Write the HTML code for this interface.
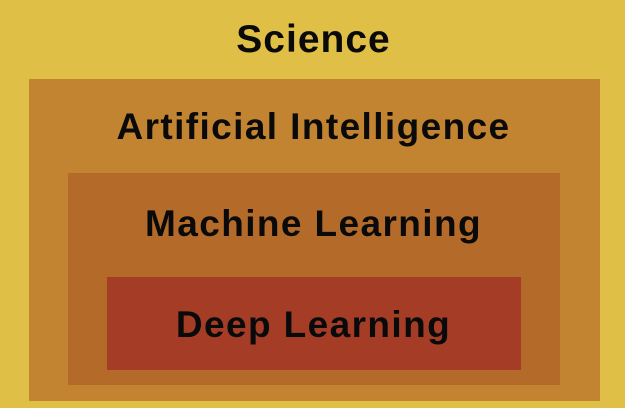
<!DOCTYPE html>
<html><head><style>
html,body{margin:0;padding:0}
body{width:625px;height:408px;background:#DFBF45;position:relative;overflow:hidden;font-family:"Liberation Sans",Arial,sans-serif;font-weight:bold;color:#0a0a0a}
.b{position:absolute}
.t{position:absolute;left:0;right:0;text-align:center;white-space:nowrap;letter-spacing:1.4px}
</style></head><body>
<div class="b" style="left:29px;top:79px;width:571px;height:322px;background:#C38432"></div>
<div class="b" style="left:68px;top:173px;width:492px;height:212px;background:#B46B2A"></div>
<div class="b" style="left:107px;top:277px;width:414px;height:93px;background:#A53D26"></div>
<div class="t" style="top:18px;font-size:39px;left:2px;letter-spacing:1px">Science</div>
<div class="t" style="top:106px;font-size:37px;left:2px">Artificial Intelligence</div>
<div class="t" style="top:203px;font-size:37px;left:2px">Machine Learning</div>
<div class="t" style="top:304px;font-size:37px;left:2px">Deep Learning</div>
</body></html>
